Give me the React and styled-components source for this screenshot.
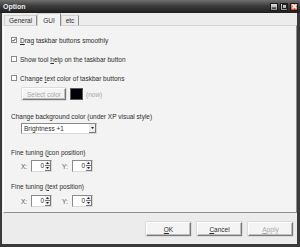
import React from 'react';
import styled, { createGlobalStyle } from 'styled-components';

const Global = createGlobalStyle`
  html, body { margin: 0; padding: 0; background: #ececec; }
  body { font-family: "Liberation Sans", Arial, sans-serif; }
`;

const Window = styled.div`
  width: 300px;
  height: 247px;
  display: flex;
  flex-direction: column;
  overflow: hidden;
  font-family: "Liberation Sans", Arial, sans-serif;
  font-size: 6.5px;
  color: #2e2e2e;
`;

const TitleBar = styled.div`
  height: 13px;
  flex: none;
  display: flex;
  align-items: center;
  justify-content: space-between;
  padding: 0 2px 0 3px;
  background: linear-gradient(#707070, #3c3c3c 45%, #1e1e1e);
`;

const Title = styled.span`
  color: #ededed;
  font-weight: bold;
  font-size: 7px;
`;

const Controls = styled.div`
  display: flex;
  gap: 2px;
`;

const CtrlBtn = styled.div`
  width: 8px;
  height: 8px;
  box-sizing: border-box;
  border: 1px solid #1a1a1a;
  background: ${p => (p.$close ? 'linear-gradient(#f39a80, #d0482c)' : 'linear-gradient(#e0e0e0, #8e8e8e)')};
  display: flex;
  align-items: center;
  justify-content: center;
`;

const Client = styled.div`
  flex: 1;
  min-height: 0;
  display: flex;
  flex-direction: column;
  background: #ececec;
  border-style: solid;
  border-color: #3a3a3a;
  border-width: 0 3px 3px 2px;
  padding: 1px 0 0 1px;
`;

const TabStrip = styled.div`
  height: 11px;
  flex: none;
  display: flex;
  align-items: flex-end;
  padding-left: 1px;
  position: relative;
  z-index: 1;
`;

const Tab = styled.div`
  box-sizing: border-box;
  height: ${p => (p.$active ? 13 : 10)}px;
  margin-bottom: ${p => (p.$active ? -1 : 0)}px;
  padding: ${p => (p.$active ? '1px 5px 0' : '0 4px')};
  display: flex;
  align-items: center;
  border-top: 1px solid #d2d2d2;
  border-left: 1px solid #d2d2d2;
  border-right: 1px solid #8c8c8c;
  background: ${p => (p.$active ? '#f3f3f3' : '#ececec')};
  font-size: 6.5px;
`;

const Panel = styled.div`
  height: 188px;
  flex: none;
  box-sizing: border-box;
  background: #f3f3f3;
  border-top: 1px solid #d4d4d4;
  border-left: 1px solid #ffffff;
  border-right: 1px solid #8e8e8e;
  border-bottom: 1px solid #8e8e8e;
  display: flex;
  flex-direction: column;
  padding: 0 0 0 7px;
`;

const Row = styled.div`
  display: flex;
  align-items: center;
  height: ${p => p.$h || 10}px;
  margin-top: ${p => p.$mt || 0}px;
  padding-left: ${p => p.$indent || 0}px;
`;

const Box = styled.div`
  width: 6px;
  height: 6px;
  box-sizing: border-box;
  border: 1px solid #8a8a8a;
  background: #fff;
  margin-right: 3px;
  display: flex;
  align-items: center;
  justify-content: center;
`;

const Label = styled.span`
  white-space: nowrap;
  color: ${p => (p.$disabled ? '#a8a8a8' : '#2e2e2e')};
`;

const U = styled.span`
  text-decoration: underline;
`;

const FlatButton = styled.div`
  box-sizing: border-box;
  width: ${p => p.$w}px;
  height: ${p => p.$h}px;
  display: flex;
  align-items: center;
  justify-content: center;
  background: #f4f4f4;
  border-top: 1px solid #ffffff;
  border-left: 1px solid #ffffff;
  border-right: 1px solid #7a7a7a;
  border-bottom: 1px solid #7a7a7a;
  box-shadow: inset -1px -1px 0 #bdbdbd, 0 0 0 0.5px #c8c8c8;
  color: ${p => (p.$disabled ? '#a8a8a8' : '#2e2e2e')};
  white-space: nowrap;
`;

const Swatch = styled.div`
  width: 13px;
  height: 12px;
  box-sizing: border-box;
  background: #000008;
  border: 1px solid #5a5a5a;
  margin: 0 3px 0 4px;
`;

const Select = styled.div`
  box-sizing: border-box;
  width: 76px;
  height: 11px;
  margin-left: 10px;
  display: flex;
  align-items: center;
  background: #fff;
  border: 1px solid #8a8a8a;
  border-right-color: #d8d8d8;
  border-bottom-color: #d8d8d8;
  padding-left: 2px;
`;

const SelectText = styled.span`
  flex: 1;
`;

const ArrowBtn = styled.div`
  width: 7px;
  height: 9px;
  box-sizing: border-box;
  background: #ececec;
  border-right: 1px solid #7a7a7a;
  border-bottom: 1px solid #7a7a7a;
  display: flex;
  align-items: center;
  justify-content: center;
`;

const Axis = styled.span`
  width: ${p => p.$w}px;
  color: #555;
`;

const Spin = styled.div`
  box-sizing: border-box;
  width: 21px;
  height: 12px;
  display: flex;
  background: #fff;
  border: 1px solid #8a8a8a;
  border-right-color: #d8d8d8;
  border-bottom-color: #d8d8d8;
  margin-right: ${p => p.$mr || 0}px;
`;

const SpinValue = styled.span`
  flex: 1;
  text-align: right;
  padding-right: 1px;
  line-height: 10px;
`;

const SpinButtons = styled.div`
  width: 6px;
  display: flex;
  flex-direction: column;
`;

const SpinHalf = styled.div`
  flex: 1;
  background: #ececec;
  border-right: 1px solid #7a7a7a;
  border-bottom: 1px solid #7a7a7a;
  display: flex;
  align-items: center;
  justify-content: center;
`;

const Footer = styled.div`
  flex: 1;
  display: flex;
  justify-content: flex-end;
  align-items: flex-start;
  gap: 6px;
  padding: 9px 4px 0 0;
`;

const Tri = ({ down }) => (
  <svg width="3" height="2" viewBox="0 0 3 2">
    <path d={down ? 'M0 0H3L1.5 2Z' : 'M0 2H3L1.5 0Z'} fill="#222" />
  </svg>
);

const Check = ({ checked }) => (
  <Box>
    {checked && (
      <svg width="4" height="4" viewBox="0 0 4 4">
        <path d="M0.4 2 L1.5 3.2 L3.6 0.6" stroke="#222" strokeWidth="0.9" fill="none" />
      </svg>
    )}
  </Box>
);

const SpinBox = ({ mr }) => (
  <Spin $mr={mr}>
    <SpinValue>0</SpinValue>
    <SpinButtons>
      <SpinHalf><Tri /></SpinHalf>
      <SpinHalf><Tri down /></SpinHalf>
    </SpinButtons>
  </Spin>
);

const SpinRow = ({ mt }) => (
  <Row $h={12} $mt={mt} $indent={10}>
    <Axis $w={10}>X:</Axis>
    <SpinBox mr={10} />
    <Axis $w={10}>Y:</Axis>
    <SpinBox />
  </Row>
);

export default function App() {
  return (
    <Window>
      <Global />
      <TitleBar>
        <Title>Option</Title>
        <Controls>
          <CtrlBtn>
            <svg width="4" height="5" viewBox="0 0 4 5"><rect x="0" y="3.5" width="4" height="1.2" fill="#222" /></svg>
          </CtrlBtn>
          <CtrlBtn>
            <svg width="5" height="5" viewBox="0 0 5 5"><rect x="0.5" y="0.5" width="4" height="4" fill="none" stroke="#222" strokeWidth="1" /></svg>
          </CtrlBtn>
          <CtrlBtn $close>
            <svg width="5" height="5" viewBox="0 0 5 5"><path d="M0.5 0.5L4.5 4.5M4.5 0.5L0.5 4.5" stroke="#fff" strokeWidth="1.3" /></svg>
          </CtrlBtn>
        </Controls>
      </TitleBar>
      <Client>
        <TabStrip>
          <Tab>General</Tab>
          <Tab $active>GUI</Tab>
          <Tab>etc</Tab>
        </TabStrip>
        <Panel>
          <Row $mt={9}>
            <Check checked />
            <Label><U>D</U>rag taskbar buttons smoothly</Label>
          </Row>
          <Row $mt={9}>
            <Check />
            <Label>Show tool <U>h</U>elp on the taskbar button</Label>
          </Row>
          <Row $mt={9}>
            <Check />
            <Label>Change <U>t</U>ext color of taskbar buttons</Label>
          </Row>
          <Row $h={12} $mt={5} $indent={11}>
            <FlatButton $w={44} $h={12} $disabled>Select color</FlatButton>
            <Swatch />
            <Label $disabled>(now)</Label>
          </Row>
          <Row $h={8} $mt={12}>
            <Label>Change background color (under XP visual style)</Label>
          </Row>
          <Row $h={11} $mt={3}>
            <Select>
              <SelectText>Brightness +1</SelectText>
              <ArrowBtn><Tri down /></ArrowBtn>
            </Select>
          </Row>
          <Row $h={8} $mt={14}>
            <Label>Fine tuning (<U>i</U>con position)</Label>
          </Row>
          <SpinRow mt={4} />
          <Row $h={8} $mt={10}>
            <Label>Fine tuning (<U>t</U>ext position)</Label>
          </Row>
          <SpinRow mt={5} />
        </Panel>
        <Footer>
          <FlatButton $w={45} $h={14}><span><U>O</U>K</span></FlatButton>
          <FlatButton $w={45} $h={14}><span><U>C</U>ancel</span></FlatButton>
          <FlatButton $w={45} $h={14} $disabled><span><U>A</U>pply</span></FlatButton>
        </Footer>
      </Client>
    </Window>
  );
}
